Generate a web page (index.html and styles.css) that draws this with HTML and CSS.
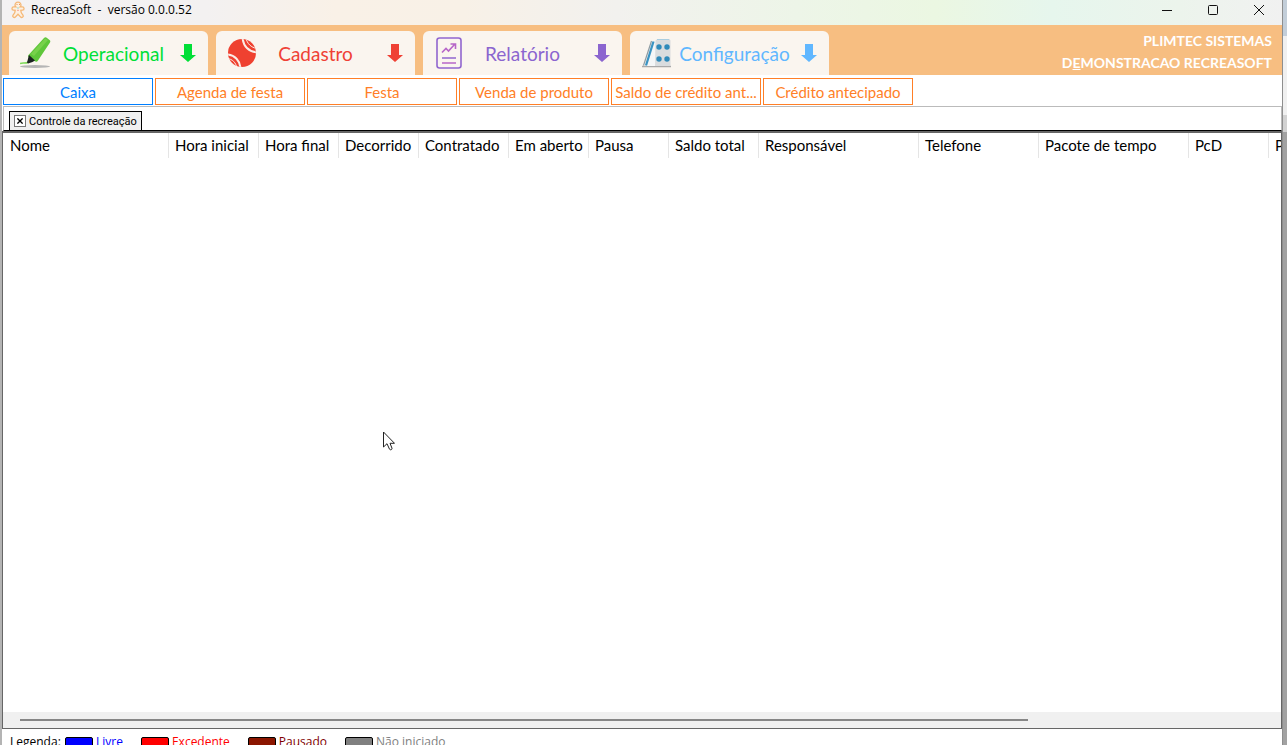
FILE: index.html
```html
<!DOCTYPE html>
<html lang="pt-BR">
<head>
<meta charset="utf-8">
<title>RecreaSoft</title>
<link rel="stylesheet" href="styles.css">
</head>
<body>
<div class="window">
  <header class="titlebar">
    <svg class="app-icon" viewBox="0 0 14 18" aria-hidden="true"><path d="M7 1.200c2 0 3.100 1.400 3 2.900-.1.800-.4 1.300-.9 1.800h2.200c2.200 0 2.400 3 .2 3.200l-1.700.2.500 2.500 1.800 2.500c.8 1.600-1.400 3-2.600 1.600L7 13.200l-2.500 2.700c-1.200 1.400-3.400 0-2.600-1.600l1.800-2.500.5-2.500-1.700-.2C.3 8.900.5 5.900 2.700 5.900h2.200C4.400 5.400 4.100 4.900 4 4.100 3.900 2.600 5 1.200 7 1.200z" fill="#fdf0e2" stroke="#f5b877" stroke-width="1.300"/><path d="M5.500 3.500h1M8 3.500h1" stroke="#e89a58"/><path d="M6.500 7h1" stroke="#3cc"/><path d="M6.500 9.300h1" stroke="#e55"/></svg>
    <span class="app-title">RecreaSoft&nbsp; -&nbsp; versão 0.0.0.52</span>
    <div class="window-controls">
      <button type="button" aria-label="Minimizar"><svg viewBox="0 0 12 12"><path d="M1 6.500h10"/></svg></button>
      <button type="button" aria-label="Maximizar"><svg viewBox="0 0 12 12"><rect x="1.500" y="1.500" width="9" height="9" rx="1"/></svg></button>
      <button type="button" aria-label="Fechar"><svg viewBox="0 0 12 12"><path d="M1 1l10 10M11 1L1 11"/></svg></button>
    </div>
  </header>

  <div class="banner">
    <nav class="menu" aria-label="Menu principal">
      <button type="button" class="menu-tab green">
        <svg class="menu-icon" viewBox="0 0 32 32"><ellipse cx="15" cy="29.500" rx="15" ry="1.500" fill="#b5b5b5"/><path d="M0 26.500c3-1 5 .5 9-1.500" fill="none" stroke="#7ed957" stroke-width="1.500"/><path d="M8.500 18L24 1c1-1 2-1 3 0l2.500 2c1 .7 1 1.500.5 2.500L18 23.500c-1 1.500-2 1.500-3.500.5L9 20.500c-1-.7-1.200-1.500-.5-2.500z" fill="#5fc63a"/><path d="M11 17L25 1.500l3 1.500-14 16z" fill="#78d14b"/><path d="M9 18l6 5.500-2.500 1.500-4.500 1.500-1-1z" fill="#1c2220"/></svg>
        <span class="menu-label wide">Operacional</span>
        <svg class="arrow" viewBox="0 0 18 18"><path d="M5 0h8v11h4l-8 7-8-7h4z"/></svg>
      </button>
      <button type="button" class="menu-tab red">
        <svg class="menu-icon" viewBox="0 0 32 32"><defs><clipPath id="ball"><circle cx="15" cy="16" r="14"/></clipPath></defs><g clip-path="url(#ball)"><path d="M0 0h32v32H0z" fill="#ef4130"/><g fill="none" stroke="#fbece6"><path d="M15.500 1c1 8 6 13.500 14.500 14.500M0 17.500c8 .5 13 6 13.500 14" stroke-width="2"/><path d="M19 1c1 5.500 5 9.500 11 10.500M0 21.500c5.500 .5 9 4 10 10" stroke-width="1"/></g></g></svg>
        <span class="menu-label">Cadastro</span>
        <svg class="arrow" viewBox="0 0 18 18"><path d="M5 0h8v11h4l-8 7-8-7h4z"/></svg>
      </button>
      <button type="button" class="menu-tab purple">
        <svg class="menu-icon" viewBox="0 0 32 32" fill="none" stroke="#9166cf"><rect x="3" y="1" width="24" height="30" rx="2.500" stroke-width="1.600"/><g stroke="#b766c8" stroke-width="1.600"><path d="M8 15.500l4-4 2.500 2.500 6-6.500M16.500 7h5v5"/></g><g stroke-width="1.500"><path d="M8 21h14"/><path d="M8 26h14" stroke="#b766c8"/></g></svg>
        <span class="menu-label">Relatório</span>
        <svg class="arrow" viewBox="0 0 18 18"><path d="M5 0h8v11h4l-8 7-8-7h4z"/></svg>
      </button>
      <button type="button" class="menu-tab blue">
        <svg class="menu-icon" viewBox="0 0 32 32"><path d="M1 29.500h29" stroke="#a9a9a9" stroke-width="1.500"/><path d="M10.500 4h4v25H4z" fill="#f4f6f7"/><path d="M10.500 4L2.500 28.500" stroke="#8f9ca3" stroke-width="1.200"/><path d="M12.500 4.500L5 28.500" stroke="#3a93c2" stroke-width="2.200"/><path d="M14.500 3.500l2-1.500h12l1 1.500V29H14z" fill="#d9dcde"/><path d="M16 2.500h12" stroke="#a9cde0"/><g fill="#2f8aba"><circle cx="18" cy="10" r="2.700"/><circle cx="26" cy="10" r="2.700"/><circle cx="18" cy="22" r="2.700"/><circle cx="26" cy="22" r="2.700"/></g></svg>
        <span class="menu-label wide">Configuração</span>
        <svg class="arrow" viewBox="0 0 18 18"><path d="M5 0h8v11h4l-8 7-8-7h4z"/></svg>
      </button>
    </nav>
    <div class="company"><span>PLIMTEC SISTEMAS</span><span>D<u>E</u>MONSTRACAO RECREASOFT</span></div>
  </div>

  <nav class="submenu" aria-label="Operacional">
    <button type="button" class="active">Caixa</button>
    <button type="button">Agenda de festa</button>
    <button type="button">Festa</button>
    <button type="button">Venda de produto</button>
    <button type="button">Saldo de crédito ant...</button>
    <button type="button">Crédito antecipado</button>
  </nav>

  <div class="page-tabs">
    <div class="page-tab">
      <button type="button" class="close" aria-label="Fechar aba"><svg viewBox="0 0 7 7"><path d="M.5.5l6 6M6.500.5l-6 6"/></svg></button>
      <span>Controle da recreação</span>
    </div>
  </div>

  <main class="grid">
    <div class="grid-view">
      <table>
        <colgroup><col class="c166"><col class="c90"><col class="c80"><col class="c80"><col class="c90"><col class="c80"><col class="c80"><col class="c90"><col class="c160"><col class="c120"><col class="c150"><col class="c80"><col class="c160"></colgroup>
        <thead><tr><th>Nome</th><th>Hora inicial</th><th>Hora final</th><th>Decorrido</th><th>Contratado</th><th>Em aberto</th><th>Pausa</th><th>Saldo total</th><th>Responsável</th><th>Telefone</th><th>Pacote de tempo</th><th>PcD</th><th>P</th></tr></thead>
        <tbody></tbody>
      </table>
    </div>
    <div class="scroll-track"><div class="scroll-thumb"></div></div>
  </main>

  <footer class="legend">
    <span class="legend-title">Legenda:</span>
    <span class="key free"><i></i>Livre</span>
    <span class="key over"><i></i>Excedente</span>
    <span class="key paused"><i></i>Pausado</span>
    <span class="key idle"><i></i>Não iniciado</span>
  </footer>
</div>
<div class="desktop-edge"></div>
<svg class="cursor" viewBox="0 0 12 20" aria-hidden="true"><path d="M.5 1v15l3.500-3.300 2.500 5.500c.8 1.300 3 .3 2.500-1L7 12.300h4.500z" fill="#fff" stroke="#222"/></svg>
</body>
</html>
```
FILE: styles.css
```css
* { box-sizing: border-box; }
body {
  margin: 0;
  height: 100vh;
  overflow: hidden;
  display: flex;
  background: #fff;
  color: #000;
  font-family: Lato, "Liberation Sans", sans-serif;
  font-size: 15px;
}
button { font: inherit; color: inherit; margin: 0; padding: 0; border: 0; background: none; }
svg { display: block; }

.window {
  flex: 1;
  min-width: 0;
  display: flex;
  flex-direction: column;
  border-left: 2px solid #b4b4b4;
}
.desktop-edge {
  flex: none;
  width: 5px;
  border-left: 1px solid #8e8e8e;
  background: linear-gradient(#c3ced9 0 36px, #f0f0f0 36px 115px, #d2d2d2 115px 132px, #a2a2a2 132px);
}

.titlebar {
  flex: none;
  height: 25px;
  display: flex;
  align-items: center;
  padding: 0 0 6px 9px;
  background: linear-gradient(90deg, #f4f2f3 0, #f3f1f1 16%, #f9f1e7 26%, #f8f1e7 36%, #f2f1ee 48%, #edf5e8 62%, #ebf7e2 73%, #e6f6ed 82%, #ecf4ec 92%, #f1f1f1 100%);
  font-family: Roboto, "Open Sans", sans-serif;
  font-size: 12px;
}
.app-icon { width: 14px; height: 18px; margin-right: 6px; }
.app-title { font-family: "Open Sans", "Noto Sans", sans-serif; }
.window-controls { display: flex; margin-left: auto; }
.window-controls button { width: 46px; display: flex; justify-content: center; }
.window-controls svg { width: 12px; height: 12px; fill: none; stroke: #111; }

.banner {
  flex: none;
  height: 50px;
  display: flex;
  justify-content: space-between;
  padding: 5px 10px 0 7px;
  background: #f7be81;
}
.menu { display: flex; gap: 8px; padding-top: 1px; }
.menu-tab {
  width: 199px;
  display: grid;
  grid-template-columns: 32px 1fr 18px;
  align-items: center;
  padding: 0 11px;
  border-radius: 6px 6px 0 0;
  background: #faf5ef;
  font-size: 19px;
}
.menu-icon { width: 32px; height: 32px; }
.menu-label { text-align: center; padding-right: 14px; white-space: nowrap; }
.menu-label.wide { padding-right: 4px; }
.arrow { width: 18px; height: 18px; fill: currentColor; }
.green { color: #00df37; }
.red { color: #ef4135; }
.purple { color: #8b65cf; }
.blue { color: #60b7ff; }
.company {
  display: flex;
  flex-direction: column;
  text-align: right;
  color: #fff;
  font-weight: 700;
  font-size: 14px;
  line-height: 22px;
}

.submenu { flex: none; display: flex; gap: 2px; padding: 3px 1px 1px; }
.submenu button {
  width: 150px;
  height: 27px;
  border: 1px solid #ff7f27;
  background: #fff;
  color: #ff7f27;
  white-space: nowrap;
}
.submenu .active { border-color: #007fff; color: #007fff; }

.page-tabs {
  flex: none;
  height: 25px;
  display: flex;
  align-items: flex-end;
  margin-left: 1px;
  padding-left: 5px;
  border: 1px solid #bbb;
  border-bottom-color: #000;
}
.page-tab {
  display: flex;
  align-items: center;
  gap: 3px;
  height: 19px;
  padding: 0 4px;
  border: 1px solid #000;
  border-bottom: 0;
  background: #f0f0f0;
  font-family: Roboto, "Open Sans", sans-serif;
  font-size: 11px;
}
.close { width: 12px; height: 12px; padding: 2px; border: 1px solid #777; background: #fff; }
.close svg { width: 6px; height: 6px; stroke: #000; stroke-width: 1.5; fill: none; }

.grid {
  flex: 1;
  min-height: 0;
  display: flex;
  flex-direction: column;
  border: 1px solid #666;
  border-top-width: 2px;
}
.grid-view { flex: 1; min-height: 0; overflow: hidden; }
table { width: 0; table-layout: fixed; border-collapse: separate; border-spacing: 0; }
th {
  height: 25px;
  padding: 0 0 2px 6px;
  border-right: 1px solid #e5e5e5;
  font-weight: 400;
  text-align: left;
  white-space: nowrap;
}
th:first-child { padding-left: 7px; }
.c80 { width: 80px; }
.c90 { width: 90px; }
.c120 { width: 120px; }
.c150 { width: 150px; }
.c160 { width: 160px; }
.c166 { width: 166px; }
.scroll-track {
  flex: none;
  height: 16px;
  display: flex;
  align-items: center;
  padding: 0 17px;
  background: #f0f0f0;
}
.scroll-thumb { width: 81%; height: 2px; background: #868686; }

.legend {
  flex: none;
  height: 16px;
  display: flex;
  align-items: flex-start;
  padding: 5px 8px 0;
  overflow: hidden;
  font-size: 12px;
  line-height: 16px;
  font-family: "Open Sans", "Noto Sans", sans-serif;
}
.legend-title { width: 55px; }
.key { display: flex; gap: 3px; margin-right: 18px; }
.key i { width: 28px; height: 14px; margin-top: 3px; border: 1px solid #000; border-radius: 2px; }
.free { color: #00f; }
.free i { background: #00f; }
.over { color: #f00; }
.over i { background: #f00; }
.paused { color: #800000; }
.paused i { background: #8b1500; }
.idle { color: #808080; }
.idle i { background: #808080; }

.cursor { position: absolute; left: 383px; top: 431px; width: 12px; height: 20px; }
```
